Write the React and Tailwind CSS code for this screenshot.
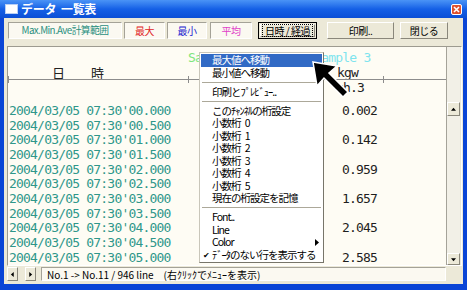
import React from 'react'

const times = ['00.000', '00.500', '01.000', '01.500', '02.000', '02.500', '03.000', '03.500', '04.000', '04.500', '05.000']
const values = { 0: '0.002', 2: '0.142', 4: '0.959', 6: '1.657', 8: '2.045', 10: '2.585' }

const menuItems = [
  { label: '最大値へ移動', active: true },
  { label: '最小値へ移動' },
  { sep: true },
  { label: '印刷とﾌﾟﾚﾋﾞｭｰ..' },
  { sep: true },
  { label: 'このﾁｬﾝﾈﾙの桁設定' },
  { label: '小数桁 0' },
  { label: '小数桁 1' },
  { label: '小数桁 2' },
  { label: '小数桁 3' },
  { label: '小数桁 4' },
  { label: '小数桁 5' },
  { label: '現在の桁設定を記憶' },
  { sep: true },
  { label: 'Font..' },
  { label: 'Line' },
  { label: 'Color', sub: true },
  { label: 'ﾃﾞｰﾀのない行を表示する', checked: true },
]

const mono = "font-[family-name:'DejaVu_Sans_Mono',monospace] text-[13px] leading-[13px] tracking-[-0.8px]"
const sunken = 'border border-t-[#a4a297] border-l-[#a4a297] border-r-white border-b-white bg-[#fbf9f1]'
const raised = 'border border-t-white border-l-white border-r-[#8a877b] border-b-[#8a877b] bg-[#ece9d8]'

const ContextMenu = () => (
  <div className="absolute left-[199px] top-[52px] w-[125px] bg-white border border-t-[#c9c6ba] border-l-[#c9c6ba] border-r-[#77756a] border-b-[#77756a] p-px text-[10.5px] tracking-[-1px] [word-spacing:3px] text-black">
    {menuItems.map((item, i) =>
      item.sep ? (
        <div key={i} className="h-[6.5px] flex items-center px-px">
          <div className="h-px flex-1 bg-[#aca899]" />
        </div>
      ) : (
        <div
          key={i}
          className={`h-[12.5px] flex items-center pl-[11px] pr-[3px] relative ${item.active ? 'bg-[#316ac5] text-white' : ''}`}
        >
          {item.checked && <span className="absolute left-[2px] text-[8px] leading-none">✔</span>}
          <span className="flex-1 whitespace-nowrap leading-none">{item.label}</span>
          {item.sub && (
            <svg width="4" height="7" viewBox="0 0 4 7"><path d="M0 0 L4 3.5 L0 7 Z" fill="#000" /></svg>
          )}
        </div>
      )
    )}
  </div>
)

const Cursor = () => (
  <svg className="absolute left-[308px] top-[57px]" width="48" height="48" viewBox="0 0 48 48">
    <polygon
      points="5,5 29,9 21,16 40,35 35,40 16,21 9,29"
      fill="#000"
      stroke="#fff"
      strokeWidth="1.5"
      strokeLinejoin="miter"
    />
  </svg>
)

const ScrollBtn = ({ dir, className = '' }) => (
  <div className={`${raised} flex items-center justify-center ${className}`}>
    <svg width="5" height="5" viewBox="0 0 6 6">
      {dir === 'up' && <path d="M0 4.5 L3 1 L6 4.5 Z" fill="#000" />}
      {dir === 'down' && <path d="M0 1.5 L3 5 L6 1.5 Z" fill="#000" />}
      {dir === 'left' && <path d="M4.5 0 L1 3 L4.5 6 Z" fill="#000" />}
      {dir === 'right' && <path d="M1.5 0 L5 3 L1.5 6 Z" fill="#000" />}
    </svg>
  </div>
)

export default function App() {
  return (
    <div className="relative w-[467px] h-[290px] flex flex-col bg-[#0a45d6] overflow-hidden font-[family-name:'Noto_Sans_CJK_JP',sans-serif]">
      {/* title bar */}
      <div className="h-[18px] flex items-center pl-[5px] pr-[5px] bg-gradient-to-b from-[#4a93f6] via-[#1560e6] to-[#0b4fd6]">
        <div className="w-[13px] h-[10px] bg-white border border-[#b8cff5]" />
        <span className="ml-[3px] text-white text-[12px] font-bold tracking-[-0.3px] leading-none whitespace-pre">データ  一覧表</span>
        <div className="ml-auto w-[11px] h-[11px] rounded-[2px] bg-[#e0502e] border border-white flex items-center justify-center">
          <svg width="7" height="7" viewBox="0 0 7 7">
            <path d="M1 1 L6 6 M6 1 L1 6" stroke="#fff" strokeWidth="1.6" />
          </svg>
        </div>
      </div>

      {/* body */}
      <div className="flex-1 mx-[4px] mb-[6px] bg-[#ece9d8] flex flex-col">
        {/* toolbar */}
        <div className="mt-[4px] h-[17px] flex text-[10px] tracking-[-0.5px]">
          <div className={`${sunken} ml-[4px] w-[114px] flex items-center justify-center text-[9.8px] tracking-[-0.6px] text-[#2a8f7f]`}>Max.Min.Ave計算範囲</div>
          <div className={`${sunken} ml-[2px] w-[41px] flex items-center justify-center text-[#e02424]`}>最大</div>
          <div className={`${sunken} ml-[2px] w-[40px] flex items-center justify-center text-[#1a1ad0]`}>最小</div>
          <div className={`${sunken} ml-[3px] w-[42px] flex items-center justify-center text-[#e040c8]`}>平均</div>
          <div className="ml-[6px] w-[59px] border border-black p-px">
            <div className={`${raised} h-full flex items-center justify-center`}>
              <span className="outline outline-1 outline-dotted outline-black px-[2px] leading-[11px]">日時 / 経過</span>
            </div>
          </div>
          <div className={`${raised} ml-[10px] w-[67px] flex items-center justify-center`}>印刷..</div>
          <div className={`${raised} ml-[6px] w-[48px] flex items-center justify-center`}>閉じる</div>
        </div>

        {/* data panel */}
        <div className="mt-[7px] ml-[3px] w-[455px] h-[220px] flex border border-t-[#9d9b90] border-l-[#9d9b90] border-r-white border-b-white">
          <div className="w-[439px] bg-[#fefcf4] border-r border-[#a5a399] flex flex-col overflow-hidden">
            <div className="h-[17px] flex items-end">
              <span className={`${mono} ml-[180px] text-[#7ee67e]`}>Sample 1</span>
              <span className={`${mono} ml-[70px] text-[#7fe4ee]`}>Sample 3</span>
            </div>
            <div className="h-[15px] flex items-end text-[13px] leading-[13px] text-[#222]">
              <span className="ml-[44px]">日</span>
              <span className="ml-[26px]">時</span>
              <span className={`${mono} ml-[233px] text-[#222]`}>kgw</span>
            </div>
            <div className="-my-[3.5px] h-[7px] flex items-center">
              <div className="w-px h-[7px] bg-[#8c8c8c]" />
              <div className="w-[179px] h-px bg-[#8c8c8c]" />
              <div className="w-px h-[7px] bg-[#8c8c8c]" />
              <div className="w-[194px] h-px bg-[#8c8c8c]" />
              <div className="w-px h-[7px] bg-[#8c8c8c]" />
              <div className="flex-1 h-px bg-[#8c8c8c]" />
            </div>
            <div className="h-[16px] flex items-center">
              <span className={`${mono} ml-[328px] text-[#222]`}>ch.3</span>
            </div>
            <div className="h-[8px]" />
            {times.map((t, i) => (
              <div key={t} className="h-[14.7px] shrink-0 grid grid-cols-[334px_1fr] items-center">
                <span className={`${mono} pl-px text-[#2f978a] whitespace-nowrap`}>2004/03/05 07:30'{t}</span>
                <span className={`${mono} text-[#1e1e1e]`}>{values[i] || ''}</span>
              </div>
            ))}
          </div>
          <div className="w-[13px] bg-[#f2f0e7] flex flex-col">
            <div className="h-[55px]" />
            <ScrollBtn dir="up" className="h-[14px]" />
            <div className="flex-1" />
            <ScrollBtn dir="down" className="h-[12px]" />
          </div>
        </div>

        {/* status row */}
        <div className="mt-px h-[14px] flex items-stretch">
          <ScrollBtn dir="left" className="ml-[3px] w-[11px]" />
          <ScrollBtn dir="right" className="ml-[7px] w-[11px]" />
          <div className={`${sunken} ml-[5px] w-[405px] flex items-center pl-[5px] text-[10px] tracking-[0px] whitespace-nowrap text-black`}>
            No.1 -&gt; No.11 / 946 line　(右ｸﾘｯｸでﾒﾆｭｰを表示)
          </div>
        </div>
      </div>

      <ContextMenu />
      <Cursor />
    </div>
  )
}
